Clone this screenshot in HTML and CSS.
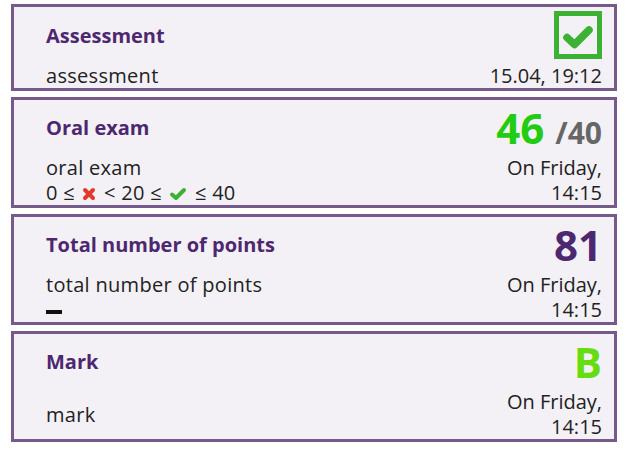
FILE: index.html
```html
<!DOCTYPE html>
<html lang="en">
<head>
  <meta charset="UTF-8" />
  <title>Grades</title>
  <link rel="stylesheet" href="styles.css">
</head>
<body>
  <div class="list">

    <div class="item">
      <div class="title">Assessment</div>
      <div class="value">
        <svg class="checkbox" viewBox="0 0 48 48" width="48" height="48">
          <rect x="2.5" y="2.5" width="43" height="43" fill="none" stroke="#3cb133" stroke-width="5" />
          <path d="M13 26.5 L20.5 33.5 L35 19" fill="none" stroke="#3cb133" stroke-width="7.5" stroke-linecap="round" stroke-linejoin="round" />
        </svg>
      </div>
      <div class="info">assessment</div>
      <div class="date">15.04, 19:12</div>
    </div>

    <div class="item">
      <div class="title">Oral exam</div>
      <div class="value"><span class="score">46</span> <span class="max">/40</span></div>
      <div class="info">
        oral exam
        <div class="range">
          0 ≤
          <svg class="icon-x" viewBox="0 0 14 14" width="14" height="14">
            <path d="M3 3 L11 11 M11 3 L3 11" stroke="#e13a2c" stroke-width="4" stroke-linecap="round" />
          </svg>
          &lt; 20 ≤
          <svg class="icon-check" viewBox="0 0 18 14" width="18" height="14">
            <path d="M3 7.5 L7 11 L15 3" fill="none" stroke="#3cb133" stroke-width="4" stroke-linecap="round" stroke-linejoin="round" />
          </svg>
          ≤ 40
        </div>
      </div>
      <div class="date">On Friday, 14:15</div>
    </div>

    <div class="item">
      <div class="title">Total number of points</div>
      <div class="value"><span class="total">81</span></div>
      <div class="info">
        total number of points
        <div class="range"><span class="dash"></span></div>
      </div>
      <div class="date">On Friday, 14:15</div>
    </div>

    <div class="item">
      <div class="title">Mark</div>
      <div class="value"><span class="mark">B</span></div>
      <div class="info">mark</div>
      <div class="date">On Friday, 14:15</div>
    </div>

  </div>
</body>
</html>
```

FILE: styles.css
```css
* {
  box-sizing: border-box;
}

body {
  margin: 0;
  background-color: #fff;
  font-family: "Open Sans", "Noto Sans", sans-serif;
  font-size: 20px;
  color: #222;
}

.list {
  margin: 4px 16px 0 11px;
}

.item {
  display: grid;
  grid-template-columns: 1fr auto;
  align-items: center;
  padding: 0 12px 0 32px;
  margin-bottom: 6px;
  background-color: #f3f1f5;
  border: 3px solid #775a8c;
}

.title {
  font-weight: bold;
  color: #4d2870;
}

.value {
  font-size: 42px;
  font-weight: bold;
  line-height: 55px;
  text-align: right;
}

.checkbox {
  display: block;
  margin: 4px 0 4px auto;
}

.score {
  color: #22cc12;
}

.max {
  font-size: 30px;
  line-height: 1;
  color: #666;
}

.total {
  color: #4d2870;
}

.mark {
  color: #66dd0f;
}

.info,
.date {
  line-height: 25px;
}

.info {
  letter-spacing: 0.3px;
}

.date {
  max-width: 120px;
  justify-self: end;
  text-align: right;
}

.range svg {
  margin: 0 2px;
  vertical-align: -1px;
}

.dash {
  display: inline-block;
  width: 16px;
  height: 4px;
  background-color: #111;
  vertical-align: 3px;
}
```
